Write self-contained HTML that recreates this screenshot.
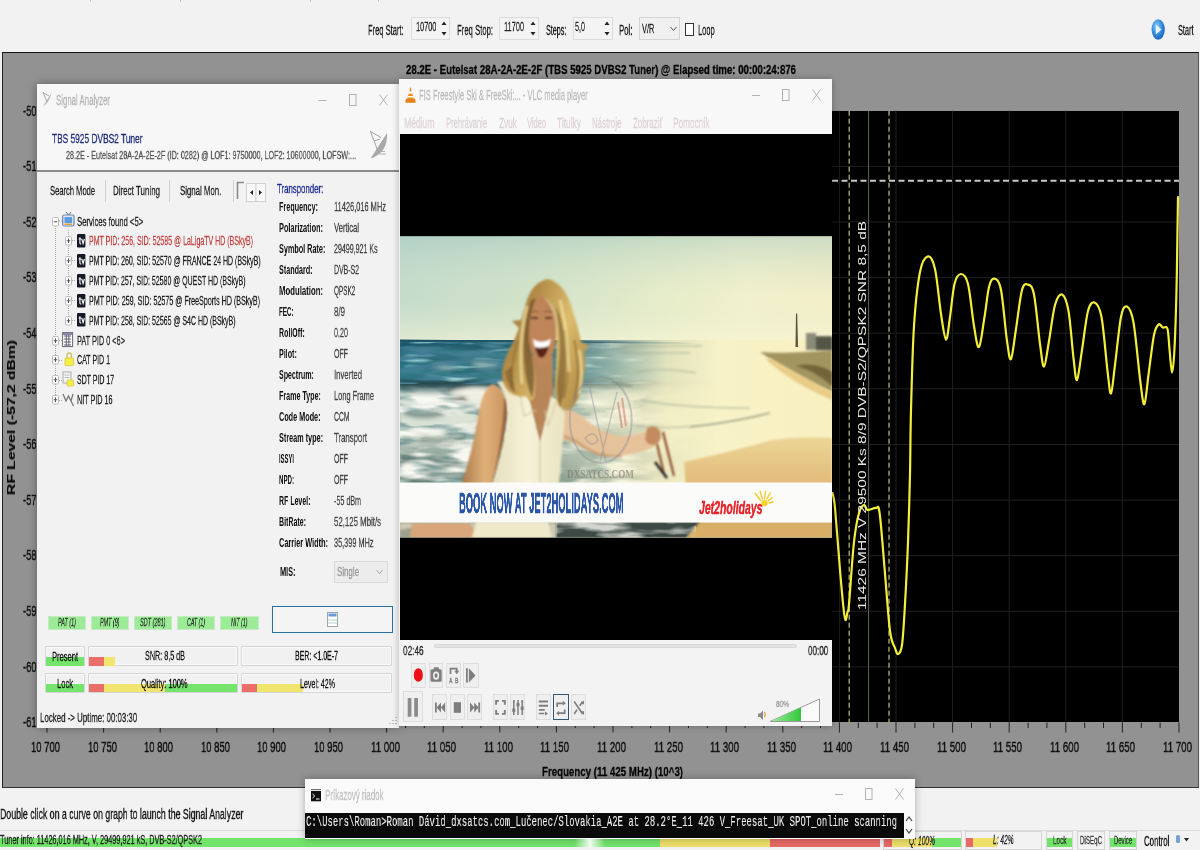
<!DOCTYPE html>
<html><head><meta charset="utf-8"><title>Signal Analyzer</title>
<style>
html,body{margin:0;padding:0;background:#f0f0f0;}
body{width:1200px;height:850px;position:relative;overflow:hidden;font-family:"Liberation Sans",sans-serif;}
.t{position:absolute;white-space:nowrap;transform-origin:0 50%;display:block;-webkit-text-stroke:0.3px currentColor;will-change:transform;}
.r{position:absolute;box-sizing:border-box;}
svg{position:absolute;overflow:visible;}
</style></head><body>
<div class="r" style="left:0.0px;top:0.0px;width:1200.0px;height:52.0px;background:#f2f2f2;"></div>
<div class="r" style="left:90.0px;top:0.0px;width:1.0px;height:1.5px;background:#c4c4c4;"></div>
<div class="r" style="left:180.0px;top:0.0px;width:1.0px;height:1.5px;background:#c4c4c4;"></div>
<div class="r" style="left:310.0px;top:0.0px;width:1.0px;height:1.5px;background:#c4c4c4;"></div>
<div class="r" style="left:378.0px;top:0.0px;width:1.0px;height:1.5px;background:#c4c4c4;"></div>
<span class="t" style="left:367.7px;top:21.0px;font:400 14px/18px 'Liberation Sans',sans-serif;color:#1a1a1a;transform:scaleX(0.5383);">Freq Start:</span>
<span class="t" style="left:456.7px;top:21.0px;font:400 14px/18px 'Liberation Sans',sans-serif;color:#1a1a1a;transform:scaleX(0.5508);">Freq Stop:</span>
<span class="t" style="left:545.7px;top:21.0px;font:400 14px/18px 'Liberation Sans',sans-serif;color:#1a1a1a;transform:scaleX(0.5115);">Steps:</span>
<span class="t" style="left:619.3px;top:21.0px;font:400 14px/18px 'Liberation Sans',sans-serif;color:#1a1a1a;transform:scaleX(0.5555);">Pol:</span>
<span class="t" style="left:698.3px;top:21.0px;font:400 14px/18px 'Liberation Sans',sans-serif;color:#1a1a1a;transform:scaleX(0.5362);">Loop</span>
<div class="r" style="left:410.7px;top:17.3px;width:39.3px;height:23.0px;background:#f4f4f4;border:1px solid #dcdcdc;"></div>
<span class="t" style="left:415.7px;top:18.0px;font:400 13px/17px 'Liberation Sans',sans-serif;color:#222;transform:scaleX(0.5616);">10700</span>
<svg style="left:441.0px;top:20px" width="6" height="18"><path d="M0.5 5 L3 1.5 L5.5 5Z M0.5 12 L3 15.5 L5.5 12Z" fill="#222"/></svg>
<div class="r" style="left:499.3px;top:17.3px;width:40.0px;height:23.0px;background:#f4f4f4;border:1px solid #dcdcdc;"></div>
<span class="t" style="left:504.3px;top:18.0px;font:400 13px/17px 'Liberation Sans',sans-serif;color:#222;transform:scaleX(0.5684);">11700</span>
<svg style="left:530.3px;top:20px" width="6" height="18"><path d="M0.5 5 L3 1.5 L5.5 5Z M0.5 12 L3 15.5 L5.5 12Z" fill="#222"/></svg>
<div class="r" style="left:572.7px;top:17.3px;width:40.6px;height:23.0px;background:#f4f4f4;border:1px solid #dcdcdc;"></div>
<span class="t" style="left:575.0px;top:18.0px;font:400 13px/17px 'Liberation Sans',sans-serif;color:#222;transform:scaleX(0.5533);">5,0</span>
<svg style="left:604.3px;top:20px" width="6" height="18"><path d="M0.5 5 L3 1.5 L5.5 5Z M0.5 12 L3 15.5 L5.5 12Z" fill="#222"/></svg>
<div class="r" style="left:639.3px;top:17.3px;width:40.7px;height:23.0px;background:#f0f0f0;border:1px solid #d4d4d4;"></div>
<span class="t" style="left:641.7px;top:19.5px;font:400 13px/17px 'Liberation Sans',sans-serif;color:#222;transform:scaleX(0.5676);">V/R</span>
<svg style="left:670px;top:26px" width="8" height="6"><path d="M0.5 1 L3.5 4.5 L6.5 1" fill="none" stroke="#555" stroke-width="1"/></svg>
<div class="r" style="left:685.0px;top:22.7px;width:9.0px;height:13.3px;background:#fff;border:1px solid #333;"></div>
<svg style="left:1148px;top:16px" width="22" height="28"><defs><radialGradient id="orb" cx="40%" cy="35%" r="70%"><stop offset="0" stop-color="#8fd0ff"/><stop offset="0.6" stop-color="#2f86d8"/><stop offset="1" stop-color="#1a5fb0"/></radialGradient></defs><ellipse cx="10.2" cy="13.5" rx="6.6" ry="10.3" fill="url(#orb)"/><path d="M7.8 8.5 L13.5 13.5 L7.8 18.5Z" fill="#e8f6ff"/></svg>
<span class="t" style="left:1177.5px;top:20.6px;font:400 14px/18px 'Liberation Sans',sans-serif;color:#1a1a1a;transform:scaleX(0.5243);">Start</span>
<div class="r" style="left:2.0px;top:52.0px;width:1196.5px;height:735.5px;background:#929292;border-top:1.5px solid #111;border-left:1px solid #222;border-bottom:1px solid #333;border-right:1px solid #555;"></div>
<span class="t" style="left:406.0px;top:60.8px;font:700 13px/17px 'Liberation Sans',sans-serif;color:#000;transform:scaleX(0.7402);">28.2E - Eutelsat 28A-2A-2E-2F (TBS 5925 DVBS2 Tuner) @ Elapsed time: 00:00:24:876</span>
<div class="r" style="left:47.0px;top:110.8px;width:1132.0px;height:611.7px;background:#000;"></div>
<span class="t" style="left:22.6px;top:100.5px;font:400 15px/19px 'Liberation Sans',sans-serif;color:#111;transform:scaleX(0.6227);-webkit-text-stroke:0.45px #111;">-50</span>
<span class="t" style="left:22.6px;top:156.1px;font:400 15px/19px 'Liberation Sans',sans-serif;color:#111;transform:scaleX(0.6227);-webkit-text-stroke:0.45px #111;">-51</span>
<span class="t" style="left:22.6px;top:211.7px;font:400 15px/19px 'Liberation Sans',sans-serif;color:#111;transform:scaleX(0.6227);-webkit-text-stroke:0.45px #111;">-52</span>
<span class="t" style="left:22.6px;top:267.3px;font:400 15px/19px 'Liberation Sans',sans-serif;color:#111;transform:scaleX(0.6227);-webkit-text-stroke:0.45px #111;">-53</span>
<span class="t" style="left:22.6px;top:322.9px;font:400 15px/19px 'Liberation Sans',sans-serif;color:#111;transform:scaleX(0.6227);-webkit-text-stroke:0.45px #111;">-54</span>
<span class="t" style="left:22.6px;top:378.5px;font:400 15px/19px 'Liberation Sans',sans-serif;color:#111;transform:scaleX(0.6227);-webkit-text-stroke:0.45px #111;">-55</span>
<span class="t" style="left:22.6px;top:434.2px;font:400 15px/19px 'Liberation Sans',sans-serif;color:#111;transform:scaleX(0.6227);-webkit-text-stroke:0.45px #111;">-56</span>
<span class="t" style="left:22.6px;top:489.8px;font:400 15px/19px 'Liberation Sans',sans-serif;color:#111;transform:scaleX(0.6227);-webkit-text-stroke:0.45px #111;">-57</span>
<span class="t" style="left:22.6px;top:545.4px;font:400 15px/19px 'Liberation Sans',sans-serif;color:#111;transform:scaleX(0.6227);-webkit-text-stroke:0.45px #111;">-58</span>
<span class="t" style="left:22.6px;top:601.0px;font:400 15px/19px 'Liberation Sans',sans-serif;color:#111;transform:scaleX(0.6227);-webkit-text-stroke:0.45px #111;">-59</span>
<span class="t" style="left:22.6px;top:656.6px;font:400 15px/19px 'Liberation Sans',sans-serif;color:#111;transform:scaleX(0.6227);-webkit-text-stroke:0.45px #111;">-60</span>
<span class="t" style="left:22.6px;top:712.2px;font:400 15px/19px 'Liberation Sans',sans-serif;color:#111;transform:scaleX(0.6227);-webkit-text-stroke:0.45px #111;">-61</span>
<span class="t" style="left:31.0px;top:736.8px;font:400 15px/19px 'Liberation Sans',sans-serif;color:#111;transform:scaleX(0.6321);-webkit-text-stroke:0.45px #111;">10 700</span>
<span class="t" style="left:87.6px;top:736.8px;font:400 15px/19px 'Liberation Sans',sans-serif;color:#111;transform:scaleX(0.6321);-webkit-text-stroke:0.45px #111;">10 750</span>
<span class="t" style="left:144.2px;top:736.8px;font:400 15px/19px 'Liberation Sans',sans-serif;color:#111;transform:scaleX(0.6321);-webkit-text-stroke:0.45px #111;">10 800</span>
<span class="t" style="left:200.8px;top:736.8px;font:400 15px/19px 'Liberation Sans',sans-serif;color:#111;transform:scaleX(0.6321);-webkit-text-stroke:0.45px #111;">10 850</span>
<span class="t" style="left:257.4px;top:736.8px;font:400 15px/19px 'Liberation Sans',sans-serif;color:#111;transform:scaleX(0.6321);-webkit-text-stroke:0.45px #111;">10 900</span>
<span class="t" style="left:314.0px;top:736.8px;font:400 15px/19px 'Liberation Sans',sans-serif;color:#111;transform:scaleX(0.6321);-webkit-text-stroke:0.45px #111;">10 950</span>
<span class="t" style="left:370.6px;top:736.8px;font:400 15px/19px 'Liberation Sans',sans-serif;color:#111;transform:scaleX(0.6478);-webkit-text-stroke:0.45px #111;">11 000</span>
<span class="t" style="left:427.2px;top:736.8px;font:400 15px/19px 'Liberation Sans',sans-serif;color:#111;transform:scaleX(0.6478);-webkit-text-stroke:0.45px #111;">11 050</span>
<span class="t" style="left:483.8px;top:736.8px;font:400 15px/19px 'Liberation Sans',sans-serif;color:#111;transform:scaleX(0.6478);-webkit-text-stroke:0.45px #111;">11 100</span>
<span class="t" style="left:540.4px;top:736.8px;font:400 15px/19px 'Liberation Sans',sans-serif;color:#111;transform:scaleX(0.6478);-webkit-text-stroke:0.45px #111;">11 150</span>
<span class="t" style="left:597.0px;top:736.8px;font:400 15px/19px 'Liberation Sans',sans-serif;color:#111;transform:scaleX(0.6478);-webkit-text-stroke:0.45px #111;">11 200</span>
<span class="t" style="left:653.6px;top:736.8px;font:400 15px/19px 'Liberation Sans',sans-serif;color:#111;transform:scaleX(0.6478);-webkit-text-stroke:0.45px #111;">11 250</span>
<span class="t" style="left:710.2px;top:736.8px;font:400 15px/19px 'Liberation Sans',sans-serif;color:#111;transform:scaleX(0.6478);-webkit-text-stroke:0.45px #111;">11 300</span>
<span class="t" style="left:766.8px;top:736.8px;font:400 15px/19px 'Liberation Sans',sans-serif;color:#111;transform:scaleX(0.6478);-webkit-text-stroke:0.45px #111;">11 350</span>
<span class="t" style="left:823.4px;top:736.8px;font:400 15px/19px 'Liberation Sans',sans-serif;color:#111;transform:scaleX(0.6478);-webkit-text-stroke:0.45px #111;">11 400</span>
<span class="t" style="left:880.0px;top:736.8px;font:400 15px/19px 'Liberation Sans',sans-serif;color:#111;transform:scaleX(0.6478);-webkit-text-stroke:0.45px #111;">11 450</span>
<span class="t" style="left:936.6px;top:736.8px;font:400 15px/19px 'Liberation Sans',sans-serif;color:#111;transform:scaleX(0.6478);-webkit-text-stroke:0.45px #111;">11 500</span>
<span class="t" style="left:993.2px;top:736.8px;font:400 15px/19px 'Liberation Sans',sans-serif;color:#111;transform:scaleX(0.6478);-webkit-text-stroke:0.45px #111;">11 550</span>
<span class="t" style="left:1049.8px;top:736.8px;font:400 15px/19px 'Liberation Sans',sans-serif;color:#111;transform:scaleX(0.6478);-webkit-text-stroke:0.45px #111;">11 600</span>
<span class="t" style="left:1106.4px;top:736.8px;font:400 15px/19px 'Liberation Sans',sans-serif;color:#111;transform:scaleX(0.6478);-webkit-text-stroke:0.45px #111;">11 650</span>
<span class="t" style="left:1163.0px;top:736.8px;font:400 15px/19px 'Liberation Sans',sans-serif;color:#111;transform:scaleX(0.6478);-webkit-text-stroke:0.45px #111;">11 700</span>
<svg style="left:0;top:0" width="1200" height="850"><path d="M47.0 722.5 v10 M65.9 722.5 v5.5 M84.7 722.5 v5.5 M103.6 722.5 v10 M122.5 722.5 v5.5 M141.3 722.5 v5.5 M160.2 722.5 v10 M179.1 722.5 v5.5 M197.9 722.5 v5.5 M216.8 722.5 v10 M235.7 722.5 v5.5 M254.5 722.5 v5.5 M273.4 722.5 v10 M292.3 722.5 v5.5 M311.1 722.5 v5.5 M330.0 722.5 v10 M348.9 722.5 v5.5 M367.7 722.5 v5.5 M386.6 722.5 v10 M405.5 722.5 v5.5 M424.3 722.5 v5.5 M443.2 722.5 v10 M462.1 722.5 v5.5 M480.9 722.5 v5.5 M499.8 722.5 v10 M518.7 722.5 v5.5 M537.5 722.5 v5.5 M556.4 722.5 v10 M575.3 722.5 v5.5 M594.1 722.5 v5.5 M613.0 722.5 v10 M631.9 722.5 v5.5 M650.7 722.5 v5.5 M669.6 722.5 v10 M688.5 722.5 v5.5 M707.3 722.5 v5.5 M726.2 722.5 v10 M745.1 722.5 v5.5 M763.9 722.5 v5.5 M782.8 722.5 v10 M801.7 722.5 v5.5 M820.5 722.5 v5.5 M839.4 722.5 v10 M858.3 722.5 v5.5 M877.1 722.5 v5.5 M896.0 722.5 v10 M914.9 722.5 v5.5 M933.7 722.5 v5.5 M952.6 722.5 v10 M971.5 722.5 v5.5 M990.3 722.5 v5.5 M1009.2 722.5 v10 M1028.1 722.5 v5.5 M1046.9 722.5 v5.5 M1065.8 722.5 v10 M1084.7 722.5 v5.5 M1103.5 722.5 v5.5 M1122.4 722.5 v10 M1141.3 722.5 v5.5 M1160.1 722.5 v5.5 M1179.0 722.5 v10 " stroke="#222" stroke-width="1" fill="none"/><path d="M103.6 110.8 V722.5 M160.2 110.8 V722.5 M216.8 110.8 V722.5 M273.4 110.8 V722.5 M330.0 110.8 V722.5 M386.6 110.8 V722.5 M443.2 110.8 V722.5 M499.8 110.8 V722.5 M556.4 110.8 V722.5 M613.0 110.8 V722.5 M669.6 110.8 V722.5 M726.2 110.8 V722.5 M782.8 110.8 V722.5 M839.4 110.8 V722.5 M896.0 110.8 V722.5 M952.6 110.8 V722.5 M1009.2 110.8 V722.5 M1065.8 110.8 V722.5 M1122.4 110.8 V722.5 M47 166.4 H1179 M47 222.0 H1179 M47 277.6 H1179 M47 333.2 H1179 M47 388.8 H1179 M47 444.5 H1179 M47 500.1 H1179 M47 555.7 H1179 M47 611.3 H1179 M47 666.9 H1179 " stroke="#1f1f1f" stroke-width="1" fill="none"/><path d="M832 180.7 H1179" stroke="#c8c8c8" stroke-width="2" stroke-dasharray="6 3.5" fill="none"/><path d="M849.2 110.8 V722.5 M889 110.8 V722.5" stroke="#b8b070" stroke-width="1.3" stroke-dasharray="5 3" fill="none"/><path d="M868.6 110.8 V722.5" stroke="#5a6a4a" stroke-width="1" fill="none"/><path d="M832.5 493.0 C832.9 495.5 833.8 495.2 835.0 508.0 C836.2 520.8 838.6 553.3 840.0 570.0 C841.4 586.7 842.6 599.7 843.5 608.0 C844.4 616.3 844.8 619.3 845.5 620.0 C846.2 620.7 846.9 614.7 847.5 612.0 C848.1 609.3 847.9 615.7 849.0 604.0 C850.1 592.3 852.3 557.2 854.0 542.0 C855.7 526.8 857.3 519.2 859.0 513.0 C860.7 506.8 862.6 505.5 864.0 505.0 C865.4 504.5 865.6 509.5 867.6 510.0 C869.6 510.5 874.0 507.5 876.0 508.0 C878.0 508.5 878.1 502.7 879.6 513.0 C881.1 523.3 883.0 550.3 884.7 570.0 C886.4 589.7 888.3 618.0 890.0 631.0 C891.7 644.0 893.7 644.2 895.0 648.0 C896.3 651.8 896.8 654.5 898.0 654.0 C899.2 653.5 900.8 653.3 902.0 645.0 C903.2 636.7 904.0 621.2 905.0 604.0 C906.0 586.8 907.2 563.7 908.0 542.0 C908.8 520.3 909.5 496.0 910.0 474.0 C910.5 452.0 910.3 434.7 911.0 410.0 C911.7 385.3 912.5 349.0 914.0 326.0 C915.5 303.0 917.7 283.6 920.0 272.0 C922.3 260.4 925.5 256.9 928.0 256.4 C930.5 255.9 932.8 259.4 935.0 269.0 C937.2 278.6 939.2 302.2 941.0 314.0 C942.8 325.8 944.5 339.0 946.0 339.5 C947.5 340.0 948.6 326.2 950.0 317.0 C951.4 307.8 952.7 291.2 954.5 284.0 C956.3 276.8 958.8 274.0 961.0 274.0 C963.2 274.0 965.8 275.3 968.0 284.0 C970.2 292.7 972.2 315.5 974.0 326.0 C975.8 336.5 977.2 348.5 979.0 347.0 C980.8 345.5 982.8 327.0 984.5 317.0 C986.2 307.0 987.4 293.4 989.0 287.0 C990.6 280.6 992.4 278.1 994.4 278.6 C996.4 279.1 998.9 279.6 1001.0 290.0 C1003.1 300.4 1005.3 329.5 1007.0 341.0 C1008.7 352.5 1009.5 361.0 1011.0 359.0 C1012.5 357.0 1014.2 340.5 1016.0 329.0 C1017.8 317.5 1020.0 297.4 1022.0 290.0 C1024.0 282.6 1026.0 283.9 1028.0 284.6 C1030.0 285.4 1032.0 284.6 1034.0 294.5 C1036.0 304.4 1038.3 332.0 1040.0 344.0 C1041.7 356.0 1042.5 367.0 1044.0 366.5 C1045.5 366.0 1047.2 351.2 1049.0 341.0 C1050.8 330.8 1052.8 312.8 1055.0 305.0 C1057.2 297.2 1059.8 293.5 1062.0 294.5 C1064.2 295.5 1066.6 300.2 1068.5 311.0 C1070.4 321.8 1072.2 347.5 1073.6 359.0 C1075.0 370.5 1075.6 381.5 1077.0 380.0 C1078.4 378.5 1080.2 361.5 1082.0 350.0 C1083.8 338.5 1085.9 318.9 1088.0 311.0 C1090.1 303.1 1092.3 301.6 1094.6 302.6 C1096.8 303.6 1099.3 305.6 1101.5 317.0 C1103.7 328.4 1105.9 358.2 1107.5 371.0 C1109.1 383.8 1109.8 394.5 1111.0 393.5 C1112.2 392.5 1113.3 377.8 1115.0 365.0 C1116.7 352.2 1119.0 326.8 1121.0 317.0 C1123.0 307.2 1124.9 305.5 1127.0 306.5 C1129.1 307.5 1131.3 310.2 1133.6 323.0 C1135.8 335.8 1138.7 369.5 1140.5 383.0 C1142.3 396.5 1143.1 405.5 1144.4 404.0 C1145.8 402.5 1147.0 385.5 1148.6 374.0 C1150.2 362.5 1152.3 343.2 1154.0 335.0 C1155.7 326.8 1157.0 325.8 1158.5 324.5 C1160.0 323.2 1161.5 326.8 1163.0 327.5 C1164.5 328.2 1166.4 325.2 1167.5 329.0 C1168.6 332.8 1168.8 342.8 1169.6 350.0 C1170.3 357.2 1171.2 372.5 1172.0 372.5 C1172.8 372.5 1173.7 363.8 1174.4 350.0 C1175.2 336.2 1176.0 310.0 1176.5 290.0 C1177.0 270.0 1177.2 245.5 1177.5 230.0 C1177.8 214.5 1177.9 202.5 1178.0 197.0" stroke="#f2ee3c" stroke-width="2.2" fill="none" stroke-linejoin="round" stroke-linecap="round"/></svg>
<div class="t" style="left:862.5px;top:609.6px;transform-origin:0 0;transform:rotate(-90deg) translateY(-50%) scaleX(1.5427);font:400 10px/12px 'Liberation Sans',sans-serif;color:#e8e8e8;-webkit-text-stroke:0">11426 MHz V 29500 Ks 8/9 DVB-S2/QPSK2 SNR 8,5 dB</div>
<div class="t" style="left:12.2px;top:494.7px;transform-origin:0 0;transform:rotate(-90deg) translateY(-50%) scaleX(1.5672);font:700 10px/12px 'Liberation Sans',sans-serif;color:#0a0a0a;-webkit-text-stroke:0.2px #0a0a0a">RF Level (-57,2 dBm)</div>
<span class="t" style="left:541.5px;top:762.5px;font:700 13px/17px 'Liberation Sans',sans-serif;color:#000;transform:scaleX(0.7463);">Frequency (11 425 MHz) (10^3)</span>
<div class="r" style="left:0.0px;top:787.5px;width:1200.0px;height:63.0px;background:#f2f2f2;"></div>
<span class="t" style="left:0.0px;top:805.0px;font:400 14px/18px 'Liberation Sans',sans-serif;color:#111;transform:scaleX(0.6265);">Double click on a curve on graph to launch the Signal Analyzer</span>
<div class="r" style="left:0.0px;top:830.0px;width:1200.0px;height:1.0px;background:#dadada;"></div>
<div class="r" style="left:0.0px;top:838.3px;width:660.0px;height:9.0px;background:#72e46a;"></div>
<div class="r" style="left:660.0px;top:838.3px;width:110.0px;height:9.0px;background:#eee06a;"></div>
<div class="r" style="left:770.0px;top:838.3px;width:110.0px;height:9.0px;background:#e86a66;"></div>
<span class="t" style="left:0.0px;top:832.0px;font:400 12px/16px 'Liberation Sans',sans-serif;color:#222;transform:scaleX(0.6089);">Tuner info: 11426,016 MHz, V, 29499,921 kS, DVB-S2/QPSK2</span>
<div class="r" style="left:883.3px;top:831.0px;width:78.4px;height:19.0px;background:#f2f2f2;border:1px solid #d6d6d6;"></div>
<div class="r" style="left:884.3px;top:838.3px;width:8.0px;height:9.0px;background:#e86a66;"></div>
<div class="r" style="left:892.0px;top:838.3px;width:40.0px;height:9.0px;background:#eee06a;"></div>
<div class="r" style="left:932.0px;top:838.3px;width:29.0px;height:9.0px;background:#72e46a;"></div>
<span class="t" style="left:909.0px;top:832.7px;font:italic 400 12px/16px 'Liberation Sans',sans-serif;color:#222;transform:scaleX(0.5568);">Q: 100%</span>
<div class="r" style="left:965.0px;top:831.0px;width:76.7px;height:19.0px;background:#f2f2f2;border:1px solid #d6d6d6;"></div>
<div class="r" style="left:966.0px;top:838.3px;width:7.0px;height:9.0px;background:#e86a66;"></div>
<div class="r" style="left:973.0px;top:838.3px;width:24.0px;height:9.0px;background:#eee06a;"></div>
<span class="t" style="left:992.7px;top:832.3px;font:italic 400 12px/16px 'Liberation Sans',sans-serif;color:#222;transform:scaleX(0.5514);">L: 42%</span>
<div class="r" style="left:1046.0px;top:831.0px;width:27.3px;height:19.0px;background:#f2f2f2;border:1px solid #d6d6d6;"></div>
<div class="r" style="left:1047.0px;top:838.3px;width:25.3px;height:9.0px;background:#72e46a;"></div>
<span class="t" style="left:1053.0px;top:832.8px;font:400 11px/15px 'Liberation Sans',sans-serif;color:#333;transform:scaleX(0.5810);">Lock</span>
<div class="r" style="left:1077.3px;top:831.0px;width:27.7px;height:19.0px;background:#f2f2f2;border:1px solid #d6d6d6;"></div>
<span class="t" style="left:1080.0px;top:832.8px;font:400 11px/15px 'Liberation Sans',sans-serif;color:#333;transform:scaleX(0.5623);">DiSEqC</span>
<div class="r" style="left:1109.3px;top:831.0px;width:27.4px;height:19.0px;background:#f2f2f2;border:1px solid #d6d6d6;"></div>
<div class="r" style="left:1110.3px;top:838.3px;width:25.4px;height:9.0px;background:#72e46a;"></div>
<span class="t" style="left:1114.0px;top:832.8px;font:400 11px/15px 'Liberation Sans',sans-serif;color:#333;transform:scaleX(0.5354);">Device</span>
<span class="t" style="left:1144.0px;top:831.5px;font:400 14px/18px 'Liberation Sans',sans-serif;color:#111;transform:scaleX(0.5606);">Control</span>
<svg style="left:1174px;top:833px" width="18" height="14"><rect x="2" y="2" width="4" height="8" rx="1.5" fill="#7aa0d8"/><path d="M10 5 h5 l-2.5 3.5z" fill="#222"/></svg>
<div class="r" style="left:36.8px;top:83.8px;width:362.5px;height:644.0px;background:#f2f2f2;box-shadow:0 0 9px rgba(0,0,0,.35);"></div>
<div class="r" style="left:36.8px;top:83.8px;width:362.5px;height:88.5px;background:#f7f7f7;border-bottom:2px solid #8a8a8a;"></div>
<svg style="left:41px;top:91px" width="12" height="18" viewBox="0 0 12 18"><path d="M10.500 2 L2 15.500 Q8 12 10.500 2Z" fill="#b4b4b4"/><path d="M2 1.500 L6 11 M2 1.500 L8 5" stroke="#a8a8a8" stroke-width="1" fill="none"/></svg>
<span class="t" style="left:56.0px;top:91.0px;font:400 14px/18px 'Liberation Sans',sans-serif;color:#b4b4b4;transform:scaleX(0.5596);">Signal Analyzer</span>
<svg style="left:315px;top:92px" width="80" height="16"><path d="M3.5 8.5 h8" stroke="#b2b2b2" stroke-width="1"/><rect x="34.5" y="2.5" width="6.5" height="11" fill="none" stroke="#b2b2b2" stroke-width="1"/><path d="M64.5 2.5 L72.5 13.5 M72.5 2.5 L64.5 13.5" stroke="#b2b2b2" stroke-width="1"/></svg>
<span class="t" style="left:52.0px;top:129.5px;font:400 13px/17px 'Liberation Sans',sans-serif;color:#1c2a7a;transform:scaleX(0.6423);">TBS 5925 DVBS2 Tuner</span>
<span class="t" style="left:65.8px;top:148.0px;font:400 11px/15px 'Liberation Sans',sans-serif;color:#505050;transform:scaleX(0.6543);">28.2E - Eutelsat 28A-2A-2E-2F (ID: 0282) @ LOF1: 9750000, LOF2: 10600000, LOFSW:...</span>
<svg style="left:0;top:0" width="400" height="170"><path d="M387 133 L370.500 158.500 Q388 153 387 133Z" fill="#a9a9a9"/><path d="M370.500 131.500 L377.500 150 M370.500 131.500 L381 137.500 M374 141 L380 139" stroke="#a0a0a0" stroke-width="1" fill="none"/><path d="M379 154 h7 M380 151.500 h5" stroke="#b0b0b0" stroke-width="1"/></svg>
<span class="t" style="left:50.3px;top:182.1px;font:400 13px/17px 'Liberation Sans',sans-serif;color:#222;transform:scaleX(0.5820);">Search Mode</span>
<span class="t" style="left:113.0px;top:182.1px;font:400 13px/17px 'Liberation Sans',sans-serif;color:#222;transform:scaleX(0.6137);">Direct Tuning</span>
<span class="t" style="left:179.7px;top:182.1px;font:400 13px/17px 'Liberation Sans',sans-serif;color:#222;transform:scaleX(0.6016);">Signal Mon.</span>
<div class="r" style="left:104.7px;top:180.0px;width:1.0px;height:22.0px;background:#cfcfcf;"></div>
<div class="r" style="left:168.8px;top:180.0px;width:1.0px;height:22.0px;background:#cfcfcf;"></div>
<div class="r" style="left:232.6px;top:180.0px;width:1.0px;height:22.0px;background:#cfcfcf;"></div>
<svg style="left:236px;top:181px" width="32" height="22"><path d="M1.5 18 V1.5 H8" stroke="#8a8a8a" stroke-width="1.6" fill="none"/><rect x="10.5" y="2.5" width="9.5" height="18" fill="#fbfbfb" stroke="#d0d0d0"/><rect x="20" y="2.5" width="9.5" height="18" fill="#fbfbfb" stroke="#d0d0d0"/><path d="M17 9 v5 l-3 -2.5z M23 9 v5 l3 -2.5z" fill="#222"/></svg>
<svg style="left:0;top:0" width="300" height="420"><path d="M55.5 226 V400 M68.5 230 V320 M59 221 h4 M72 240.5 h4 M72 260.5 h4 M72 280.5 h4 M72 300.5 h4 M72 320.5 h4 M59 340.5 h4 M59 360.5 h4 M59 380.5 h4 M59 400.5 h4" stroke="#aaa" stroke-width="1" stroke-dasharray="1 1" fill="none"/></svg>
<svg style="left:52.0px;top:216.5px" width="7" height="10"><rect x="0.500" y="0.500" width="6" height="8.500" rx="1" fill="#fdfdfd" stroke="#bcbcbc"/><path d="M1.800 4.750 h3.400" stroke="#555" stroke-width="1"/></svg>
<svg style="left:62px;top:211px" width="13" height="17"><path d="M4 1 L6.5 4 L9 1" stroke="#666" stroke-width="1" fill="none"/><rect x="0.7" y="4" width="11.3" height="11" rx="1.5" fill="#dfe9f5" stroke="#6a8ab0" stroke-width="1.2"/><rect x="2.5" y="6" width="7.6" height="6" fill="#5b9be0"/><rect x="2.5" y="12.5" width="7.6" height="1.5" fill="#e9a03a"/></svg>
<span class="t" style="left:76.8px;top:212.5px;font:400 13px/17px 'Liberation Sans',sans-serif;color:#222;transform:scaleX(0.5910);">Services found &lt;5&gt;</span>
<svg style="left:65.0px;top:236.1px" width="7" height="10"><rect x="0.500" y="0.500" width="6" height="8.500" rx="1" fill="#fdfdfd" stroke="#bcbcbc"/><path d="M1.800 4.750 h3.400 M3.500 2.500 v4.500" stroke="#555" stroke-width="1"/></svg>
<svg style="left:76.500px;top:233.8px" width="9" height="14"><rect x="0" y="0" width="8.400" height="13.400" rx="1.200" fill="#121826"/><path d="M1.600 5 h2.800 M2.900 3.300 v5.800 q0 1 1.300 0.800 M4.800 5 l1.300 4.600 l1.300 -4.600" stroke="#fff" stroke-width="1.100" fill="none"/></svg>
<span class="t" style="left:89.4px;top:232.1px;font:400 13px/17px 'Liberation Sans',sans-serif;color:#c44444;transform:scaleX(0.5405);">PMT PID: 256, SID: 52585 @ LaLigaTV HD (BSkyB)</span>
<svg style="left:65.0px;top:256.0px" width="7" height="10"><rect x="0.500" y="0.500" width="6" height="8.500" rx="1" fill="#fdfdfd" stroke="#bcbcbc"/><path d="M1.800 4.750 h3.400 M3.500 2.500 v4.500" stroke="#555" stroke-width="1"/></svg>
<svg style="left:76.500px;top:253.7px" width="9" height="14"><rect x="0" y="0" width="8.400" height="13.400" rx="1.200" fill="#121826"/><path d="M1.600 5 h2.800 M2.900 3.300 v5.800 q0 1 1.300 0.800 M4.800 5 l1.300 4.600 l1.300 -4.600" stroke="#fff" stroke-width="1.100" fill="none"/></svg>
<span class="t" style="left:89.4px;top:252.0px;font:400 13px/17px 'Liberation Sans',sans-serif;color:#222;transform:scaleX(0.5375);">PMT PID: 260, SID: 52570 @ FRANCE 24 HD (BSkyB)</span>
<svg style="left:65.0px;top:275.9px" width="7" height="10"><rect x="0.500" y="0.500" width="6" height="8.500" rx="1" fill="#fdfdfd" stroke="#bcbcbc"/><path d="M1.800 4.750 h3.400 M3.500 2.500 v4.500" stroke="#555" stroke-width="1"/></svg>
<svg style="left:76.500px;top:273.6px" width="9" height="14"><rect x="0" y="0" width="8.400" height="13.400" rx="1.200" fill="#121826"/><path d="M1.600 5 h2.800 M2.900 3.300 v5.800 q0 1 1.300 0.800 M4.800 5 l1.300 4.600 l1.300 -4.600" stroke="#fff" stroke-width="1.100" fill="none"/></svg>
<span class="t" style="left:89.4px;top:271.9px;font:400 13px/17px 'Liberation Sans',sans-serif;color:#222;transform:scaleX(0.5354);">PMT PID: 257, SID: 52580 @ QUEST HD (BSkyB)</span>
<svg style="left:65.0px;top:295.8px" width="7" height="10"><rect x="0.500" y="0.500" width="6" height="8.500" rx="1" fill="#fdfdfd" stroke="#bcbcbc"/><path d="M1.800 4.750 h3.400 M3.500 2.500 v4.500" stroke="#555" stroke-width="1"/></svg>
<svg style="left:76.500px;top:293.5px" width="9" height="14"><rect x="0" y="0" width="8.400" height="13.400" rx="1.200" fill="#121826"/><path d="M1.600 5 h2.800 M2.900 3.300 v5.800 q0 1 1.300 0.800 M4.800 5 l1.300 4.600 l1.300 -4.600" stroke="#fff" stroke-width="1.100" fill="none"/></svg>
<span class="t" style="left:89.4px;top:291.8px;font:400 13px/17px 'Liberation Sans',sans-serif;color:#222;transform:scaleX(0.5480);">PMT PID: 259, SID: 52575 @ FreeSports HD (BSkyB)</span>
<svg style="left:65.0px;top:315.7px" width="7" height="10"><rect x="0.500" y="0.500" width="6" height="8.500" rx="1" fill="#fdfdfd" stroke="#bcbcbc"/><path d="M1.800 4.750 h3.400 M3.500 2.500 v4.500" stroke="#555" stroke-width="1"/></svg>
<svg style="left:76.500px;top:313.4px" width="9" height="14"><rect x="0" y="0" width="8.400" height="13.400" rx="1.200" fill="#121826"/><path d="M1.600 5 h2.800 M2.900 3.300 v5.800 q0 1 1.300 0.800 M4.800 5 l1.300 4.600 l1.300 -4.600" stroke="#fff" stroke-width="1.100" fill="none"/></svg>
<span class="t" style="left:89.4px;top:311.7px;font:400 13px/17px 'Liberation Sans',sans-serif;color:#222;transform:scaleX(0.5365);">PMT PID: 258, SID: 52565 @ S4C HD (BSkyB)</span>
<svg style="left:52.0px;top:335.5px" width="7" height="10"><rect x="0.500" y="0.500" width="6" height="8.500" rx="1" fill="#fdfdfd" stroke="#bcbcbc"/><path d="M1.800 4.750 h3.400 M3.500 2.500 v4.500" stroke="#555" stroke-width="1"/></svg>
<span class="t" style="left:76.8px;top:331.5px;font:400 13px/17px 'Liberation Sans',sans-serif;color:#222;transform:scaleX(0.5617);">PAT PID 0 &lt;6&gt;</span>
<svg style="left:52.0px;top:355.4px" width="7" height="10"><rect x="0.500" y="0.500" width="6" height="8.500" rx="1" fill="#fdfdfd" stroke="#bcbcbc"/><path d="M1.800 4.750 h3.400 M3.500 2.500 v4.500" stroke="#555" stroke-width="1"/></svg>
<span class="t" style="left:76.8px;top:351.4px;font:400 13px/17px 'Liberation Sans',sans-serif;color:#222;transform:scaleX(0.5416);">CAT PID 1</span>
<svg style="left:52.0px;top:375.2px" width="7" height="10"><rect x="0.500" y="0.500" width="6" height="8.500" rx="1" fill="#fdfdfd" stroke="#bcbcbc"/><path d="M1.800 4.750 h3.400 M3.500 2.500 v4.500" stroke="#555" stroke-width="1"/></svg>
<span class="t" style="left:76.8px;top:371.2px;font:400 13px/17px 'Liberation Sans',sans-serif;color:#222;transform:scaleX(0.5353);">SDT PID 17</span>
<svg style="left:52.0px;top:395.1px" width="7" height="10"><rect x="0.500" y="0.500" width="6" height="8.500" rx="1" fill="#fdfdfd" stroke="#bcbcbc"/><path d="M1.800 4.750 h3.400 M3.500 2.500 v4.500" stroke="#555" stroke-width="1"/></svg>
<span class="t" style="left:76.8px;top:391.1px;font:400 13px/17px 'Liberation Sans',sans-serif;color:#222;transform:scaleX(0.5542);">NIT PID 16</span>
<svg style="left:62px;top:332px" width="12" height="16"><rect x="0.6" y="0.6" width="10" height="14" fill="#fff" stroke="#667"/><path d="M2 4 h7 M2 7 h7 M2 10 h7 M2 13 h7 M4.3 3 v11 M6.8 3 v11" stroke="#556" stroke-width="0.9"/><rect x="1" y="1" width="9" height="2" fill="#88a"/></svg>
<svg style="left:64px;top:351px" width="10" height="16"><path d="M3 7 V4.5 a2.2 2.5 0 0 1 4.4 0 V7" stroke="#c8c060" stroke-width="1.3" fill="none"/><rect x="1" y="7" width="8.5" height="7.5" rx="1" fill="#f4ee4a" stroke="#d4c830" stroke-width="0.8"/></svg>
<svg style="left:62px;top:371px" width="13" height="17"><rect x="1" y="1" width="8" height="11" fill="#f4f4f4" stroke="#aaa"/><path d="M2.5 4 h5 M2.5 6.5 h5" stroke="#bbb"/><rect x="5" y="9" width="6.5" height="6" rx="1" fill="#f4ee4a" stroke="#d4c830" stroke-width="0.8"/></svg>
<svg style="left:62px;top:392px" width="13" height="15"><path d="M1 2 L4 9 L6.5 4 L9 9 L11 2 M9 9 L11.5 14" stroke="#777" stroke-width="1.3" fill="none"/></svg>
<span class="t" style="left:276.8px;top:179.8px;font:400 13px/17px 'Liberation Sans',sans-serif;color:#1c2a90;transform:scaleX(0.6013);">Transponder:</span>
<span class="t" style="left:279.0px;top:198.2px;font:700 13px/17px 'Liberation Sans',sans-serif;color:#111;transform:scaleX(0.5566);-webkit-text-stroke:0;">Frequency:</span>
<span class="t" style="left:334.0px;top:198.2px;font:400 13px/17px 'Liberation Sans',sans-serif;color:#444;transform:scaleX(0.5726);">11426,016 MHz</span>
<span class="t" style="left:279.0px;top:219.2px;font:700 13px/17px 'Liberation Sans',sans-serif;color:#111;transform:scaleX(0.5640);-webkit-text-stroke:0;">Polarization:</span>
<span class="t" style="left:334.0px;top:219.2px;font:400 13px/17px 'Liberation Sans',sans-serif;color:#444;transform:scaleX(0.5864);">Vertical</span>
<span class="t" style="left:279.0px;top:240.2px;font:700 13px/17px 'Liberation Sans',sans-serif;color:#111;transform:scaleX(0.5573);-webkit-text-stroke:0;">Symbol Rate:</span>
<span class="t" style="left:334.0px;top:240.2px;font:400 13px/17px 'Liberation Sans',sans-serif;color:#444;transform:scaleX(0.5434);">29499,921 Ks</span>
<span class="t" style="left:279.0px;top:261.2px;font:700 13px/17px 'Liberation Sans',sans-serif;color:#111;transform:scaleX(0.5538);-webkit-text-stroke:0;">Standard:</span>
<span class="t" style="left:334.0px;top:261.2px;font:400 13px/17px 'Liberation Sans',sans-serif;color:#444;transform:scaleX(0.5324);">DVB-S2</span>
<span class="t" style="left:279.0px;top:282.2px;font:700 13px/17px 'Liberation Sans',sans-serif;color:#111;transform:scaleX(0.5974);-webkit-text-stroke:0;">Modulation:</span>
<span class="t" style="left:334.0px;top:282.2px;font:400 13px/17px 'Liberation Sans',sans-serif;color:#444;transform:scaleX(0.4913);">QPSK2</span>
<span class="t" style="left:279.0px;top:303.2px;font:700 13px/17px 'Liberation Sans',sans-serif;color:#111;transform:scaleX(0.4781);-webkit-text-stroke:0;">FEC:</span>
<span class="t" style="left:334.0px;top:303.2px;font:400 13px/17px 'Liberation Sans',sans-serif;color:#444;transform:scaleX(0.6087);">8/9</span>
<span class="t" style="left:279.0px;top:324.2px;font:700 13px/17px 'Liberation Sans',sans-serif;color:#111;transform:scaleX(0.5393);-webkit-text-stroke:0;">RollOff:</span>
<span class="t" style="left:334.0px;top:324.2px;font:400 13px/17px 'Liberation Sans',sans-serif;color:#444;transform:scaleX(0.5533);">0.20</span>
<span class="t" style="left:279.0px;top:345.2px;font:700 13px/17px 'Liberation Sans',sans-serif;color:#111;transform:scaleX(0.5478);-webkit-text-stroke:0;">Pilot:</span>
<span class="t" style="left:334.0px;top:345.2px;font:400 13px/17px 'Liberation Sans',sans-serif;color:#444;transform:scaleX(0.5386);">OFF</span>
<span class="t" style="left:279.0px;top:366.2px;font:700 13px/17px 'Liberation Sans',sans-serif;color:#111;transform:scaleX(0.5413);-webkit-text-stroke:0;">Spectrum:</span>
<span class="t" style="left:334.0px;top:366.2px;font:400 13px/17px 'Liberation Sans',sans-serif;color:#444;transform:scaleX(0.5961);">Inverted</span>
<span class="t" style="left:279.0px;top:387.2px;font:700 13px/17px 'Liberation Sans',sans-serif;color:#111;transform:scaleX(0.5489);-webkit-text-stroke:0;">Frame Type:</span>
<span class="t" style="left:334.0px;top:387.2px;font:400 13px/17px 'Liberation Sans',sans-serif;color:#444;transform:scaleX(0.5707);">Long Frame</span>
<span class="t" style="left:279.0px;top:408.2px;font:700 13px/17px 'Liberation Sans',sans-serif;color:#111;transform:scaleX(0.5579);-webkit-text-stroke:0;">Code Mode:</span>
<span class="t" style="left:334.0px;top:408.2px;font:400 13px/17px 'Liberation Sans',sans-serif;color:#444;transform:scaleX(0.5236);">CCM</span>
<span class="t" style="left:279.0px;top:429.2px;font:700 13px/17px 'Liberation Sans',sans-serif;color:#111;transform:scaleX(0.5587);-webkit-text-stroke:0;">Stream type:</span>
<span class="t" style="left:334.0px;top:429.2px;font:400 13px/17px 'Liberation Sans',sans-serif;color:#444;transform:scaleX(0.5984);">Transport</span>
<span class="t" style="left:279.0px;top:450.2px;font:700 13px/17px 'Liberation Sans',sans-serif;color:#111;transform:scaleX(0.4513);-webkit-text-stroke:0;">ISSYI</span>
<span class="t" style="left:334.0px;top:450.2px;font:400 13px/17px 'Liberation Sans',sans-serif;color:#444;transform:scaleX(0.5386);">OFF</span>
<span class="t" style="left:279.0px;top:471.2px;font:700 13px/17px 'Liberation Sans',sans-serif;color:#111;transform:scaleX(0.4721);-webkit-text-stroke:0;">NPD:</span>
<span class="t" style="left:334.0px;top:471.2px;font:400 13px/17px 'Liberation Sans',sans-serif;color:#444;transform:scaleX(0.5386);">OFF</span>
<span class="t" style="left:279.0px;top:492.2px;font:700 13px/17px 'Liberation Sans',sans-serif;color:#111;transform:scaleX(0.5383);-webkit-text-stroke:0;">RF Level:</span>
<span class="t" style="left:334.0px;top:492.2px;font:400 13px/17px 'Liberation Sans',sans-serif;color:#444;transform:scaleX(0.5495);">-55 dBm</span>
<span class="t" style="left:279.0px;top:513.2px;font:700 13px/17px 'Liberation Sans',sans-serif;color:#111;transform:scaleX(0.5418);-webkit-text-stroke:0;">BitRate:</span>
<span class="t" style="left:334.0px;top:513.2px;font:400 13px/17px 'Liberation Sans',sans-serif;color:#444;transform:scaleX(0.6022);">52,125 Mbit/s</span>
<span class="t" style="left:279.0px;top:534.2px;font:700 13px/17px 'Liberation Sans',sans-serif;color:#111;transform:scaleX(0.5661);-webkit-text-stroke:0;">Carrier Width:</span>
<span class="t" style="left:334.0px;top:534.2px;font:400 13px/17px 'Liberation Sans',sans-serif;color:#444;transform:scaleX(0.5636);">35,399 MHz</span>
<span class="t" style="left:279.5px;top:563.3px;font:700 13px/17px 'Liberation Sans',sans-serif;color:#111;transform:scaleX(0.5648);-webkit-text-stroke:0;">MIS:</span>
<div class="r" style="left:333.5px;top:561.0px;width:54.0px;height:21.5px;background:#ececec;border:1px solid #d9d9d9;"></div>
<span class="t" style="left:337.0px;top:563.3px;font:400 13px/17px 'Liberation Sans',sans-serif;color:#999;transform:scaleX(0.6088);">Single</span>
<svg style="left:376px;top:569px" width="8" height="6"><path d="M0.5 1 L3.5 4.5 L6.5 1" fill="none" stroke="#aaa" stroke-width="1"/></svg>
<div class="r" style="left:48.0px;top:615.5px;width:37.9px;height:14.5px;background:#9ceb96;border:1px solid #c9e9c6;"></div>
<span class="t" style="left:58.0px;top:615.3px;font:italic 400 11px/15px 'Liberation Sans',sans-serif;color:#2a3a2a;transform:scaleX(0.4964);">PAT (1)</span>
<div class="r" style="left:91.0px;top:615.5px;width:38.0px;height:14.5px;background:#9ceb96;border:1px solid #c9e9c6;"></div>
<span class="t" style="left:100.2px;top:615.3px;font:italic 400 11px/15px 'Liberation Sans',sans-serif;color:#2a3a2a;transform:scaleX(0.4910);">PMT (9)</span>
<div class="r" style="left:133.7px;top:615.5px;width:37.9px;height:14.5px;background:#9ceb96;border:1px solid #c9e9c6;"></div>
<span class="t" style="left:139.9px;top:615.3px;font:italic 400 11px/15px 'Liberation Sans',sans-serif;color:#2a3a2a;transform:scaleX(0.5026);">SDT (281)</span>
<div class="r" style="left:176.8px;top:615.5px;width:38.0px;height:14.5px;background:#9ceb96;border:1px solid #c9e9c6;"></div>
<span class="t" style="left:186.8px;top:615.3px;font:italic 400 11px/15px 'Liberation Sans',sans-serif;color:#2a3a2a;transform:scaleX(0.4777);">CAT (1)</span>
<div class="r" style="left:220.0px;top:615.5px;width:38.5px;height:14.5px;background:#9ceb96;border:1px solid #c9e9c6;"></div>
<span class="t" style="left:231.0px;top:615.3px;font:italic 400 11px/15px 'Liberation Sans',sans-serif;color:#2a3a2a;transform:scaleX(0.4822);">NIT (1)</span>
<div class="r" style="left:271.8px;top:605.7px;width:121.0px;height:27.7px;background:#f4f4f4;border:1.6px solid #2f7196;box-shadow:0 0 0 1px #e4f4fb;"></div>
<svg style="left:327px;top:612px" width="12" height="16"><rect x="0.5" y="0.5" width="10" height="14" fill="#fff" stroke="#9aa"/><rect x="1.5" y="1.5" width="8" height="3" fill="#6a9ad8"/><path d="M1 8 h9 M1 11 h9" stroke="#bcc"/></svg>
<div class="r" style="left:44.9px;top:645.8px;width:40.1px;height:20.6px;background:#f1f1f1;border:1px solid #d5d5d5;border-radius:1px;box-shadow:inset 0 0 0 1px #fafafa;"></div>
<div class="r" style="left:45.9px;top:657.0px;width:38.1px;height:8.6px;background:#74e46c;"></div>
<span class="t" style="left:52.0px;top:648.0px;font:400 13px/17px 'Liberation Sans',sans-serif;color:#111;transform:scaleX(0.5803);">Present</span>
<div class="r" style="left:88.3px;top:645.8px;width:150.2px;height:20.6px;background:#f1f1f1;border:1px solid #d5d5d5;border-radius:1px;box-shadow:inset 0 0 0 1px #fafafa;"></div>
<div class="r" style="left:89.3px;top:656.8px;width:14.4px;height:8.8px;background:#ea6e6a;"></div>
<div class="r" style="left:103.7px;top:656.8px;width:11.5px;height:8.8px;background:#f0e66e;"></div>
<span class="t" style="left:145.0px;top:647.0px;font:400 13px/17px 'Liberation Sans',sans-serif;color:#111;transform:scaleX(0.5536);">SNR: 8,5 dB</span>
<div class="r" style="left:241.0px;top:645.8px;width:151.0px;height:20.6px;background:#f1f1f1;border:1px solid #d5d5d5;border-radius:1px;box-shadow:inset 0 0 0 1px #fafafa;"></div>
<span class="t" style="left:295.0px;top:647.0px;font:400 13px/17px 'Liberation Sans',sans-serif;color:#111;transform:scaleX(0.5385);">BER: &lt;1.0E-7</span>
<div class="r" style="left:44.9px;top:672.6px;width:40.1px;height:20.7px;background:#f1f1f1;border:1px solid #d5d5d5;border-radius:1px;box-shadow:inset 0 0 0 1px #fafafa;"></div>
<div class="r" style="left:45.9px;top:683.6px;width:38.1px;height:8.8px;background:#74e46c;"></div>
<span class="t" style="left:56.5px;top:674.5px;font:400 13px/17px 'Liberation Sans',sans-serif;color:#111;transform:scaleX(0.5827);">Lock</span>
<div class="r" style="left:88.3px;top:672.6px;width:150.2px;height:20.7px;background:#f1f1f1;border:1px solid #d5d5d5;border-radius:1px;box-shadow:inset 0 0 0 1px #fafafa;"></div>
<div class="r" style="left:89.3px;top:683.6px;width:14.4px;height:8.8px;background:#ea6e6a;"></div>
<div class="r" style="left:103.7px;top:683.6px;width:61.0px;height:8.8px;background:#f0e66e;"></div>
<div class="r" style="left:164.7px;top:683.6px;width:72.8px;height:8.8px;background:#74e46c;"></div>
<span class="t" style="left:140.5px;top:674.5px;font:400 13px/17px 'Liberation Sans',sans-serif;color:#111;transform:scaleX(0.5746);">Quality: 100%</span>
<div class="r" style="left:241.0px;top:672.6px;width:151.0px;height:20.7px;background:#f1f1f1;border:1px solid #d5d5d5;border-radius:1px;box-shadow:inset 0 0 0 1px #fafafa;"></div>
<div class="r" style="left:242.0px;top:683.6px;width:15.0px;height:8.8px;background:#ea6e6a;"></div>
<div class="r" style="left:257.0px;top:683.6px;width:46.0px;height:8.8px;background:#f0e66e;"></div>
<span class="t" style="left:300.0px;top:674.5px;font:400 13px/17px 'Liberation Sans',sans-serif;color:#111;transform:scaleX(0.5442);">Level: 42%</span>
<span class="t" style="left:39.6px;top:708.8px;font:400 13px/17px 'Liberation Sans',sans-serif;color:#222;transform:scaleX(0.6072);">Locked -&gt; Uptime: 00:03:30</span>
<svg style="left:388px;top:716px" width="10" height="10"><path d="M8 1 v1 M8 4 v1 M8 7 v1 M5 4 v1 M5 7 v1 M2 7 v1" stroke="#b0b0b0" stroke-width="1.5"/></svg>
<div class="r" style="left:399.3px;top:78.7px;width:433.0px;height:647.0px;background:#f3f3f3;box-shadow:0 0 7px rgba(0,0,0,.28);"></div>
<div class="r" style="left:399.3px;top:78.7px;width:433.0px;height:55.0px;background:#f8f8f8;"></div>
<svg style="left:404.5px;top:85.5px" width="11" height="18" viewBox="0 0 11 18"><path d="M5.5 0.5 L8.7 13 H2.3Z" fill="#f08a1a"/><path d="M4.2 5.2 h2.6 l0.6 2.6 h-3.8z" fill="#fff"/><path d="M3.2 10 h4.6 l0.4 1.6 h-5.4z" fill="#fff"/><path d="M1 12.8 h9 l0.8 4 h-10.6z" fill="#e8801a"/></svg>
<span class="t" style="left:418.8px;top:86.2px;font:400 14px/18px 'Liberation Sans',sans-serif;color:#bcbcbc;transform:scaleX(0.5421);">FIS Freestyle Ski &amp; FreeSki:... - VLC media player</span>
<svg style="left:748px;top:87px" width="80" height="16"><path d="M4 8.5 h8" stroke="#b2b2b2" stroke-width="1"/><rect x="34.5" y="2.5" width="6.5" height="11" fill="none" stroke="#b2b2b2" stroke-width="1"/><path d="M64.5 2.5 L72.5 13.5 M72.5 2.5 L64.5 13.5" stroke="#b2b2b2" stroke-width="1"/></svg>
<span class="t" style="left:404.2px;top:114.4px;font:400 14px/18px 'Liberation Sans',sans-serif;color:#dcd2d6;transform:scaleX(0.6105);">Médium</span>
<span class="t" style="left:446.3px;top:114.4px;font:400 14px/18px 'Liberation Sans',sans-serif;color:#dcd2d6;transform:scaleX(0.5444);">Prehrávanie</span>
<span class="t" style="left:498.8px;top:114.4px;font:400 14px/18px 'Liberation Sans',sans-serif;color:#dcd2d6;transform:scaleX(0.5900);">Zvuk</span>
<span class="t" style="left:527.0px;top:114.4px;font:400 14px/18px 'Liberation Sans',sans-serif;color:#dcd2d6;transform:scaleX(0.5344);">Video</span>
<span class="t" style="left:557.4px;top:114.4px;font:400 14px/18px 'Liberation Sans',sans-serif;color:#dcd2d6;transform:scaleX(0.5986);">Titulky</span>
<span class="t" style="left:592.3px;top:114.4px;font:400 14px/18px 'Liberation Sans',sans-serif;color:#dcd2d6;transform:scaleX(0.5620);">Nástroje</span>
<span class="t" style="left:632.6px;top:114.4px;font:400 14px/18px 'Liberation Sans',sans-serif;color:#dcd2d6;transform:scaleX(0.5661);">Zobraziť</span>
<span class="t" style="left:673.0px;top:114.4px;font:400 14px/18px 'Liberation Sans',sans-serif;color:#dcd2d6;transform:scaleX(0.5880);">Pomocník</span>
<div class="r" style="left:399.5px;top:133.7px;width:432.5px;height:506.3px;background:#000;"></div>
<svg style="left:0;top:0" width="1200" height="850" viewBox="0 0 1200 850">
<defs>
<clipPath id="pc"><rect x="400" y="236.3" width="432" height="301.2"/></clipPath>
<linearGradient id="sky" x1="0" x2="1" y1="0" y2="0"><stop offset="0" stop-color="#c2dacb"/><stop offset="0.35" stop-color="#d3e3c9"/><stop offset="0.6" stop-color="#e6ecc9"/><stop offset="0.8" stop-color="#f3f1cc"/><stop offset="1" stop-color="#f4eec6"/></linearGradient>
<linearGradient id="skyv" x1="0" x2="0" y1="0" y2="1"><stop offset="0" stop-color="#9cc4c0" stop-opacity="0.45"/><stop offset="0.6" stop-color="#dfeacc" stop-opacity="0.1"/><stop offset="1" stop-color="#fbf7d8" stop-opacity="0.55"/></linearGradient>
<linearGradient id="sea" x1="0" x2="0" y1="0" y2="1"><stop offset="0" stop-color="#1c586c"/><stop offset="0.12" stop-color="#2a7382"/><stop offset="0.19" stop-color="#2d7480"/><stop offset="0.215" stop-color="#274c56"/><stop offset="0.25" stop-color="#6f958f"/><stop offset="0.32" stop-color="#a9bcb0"/><stop offset="0.45" stop-color="#b3c1b3"/><stop offset="0.6" stop-color="#93a99f"/><stop offset="0.72" stop-color="#6f8a82"/><stop offset="1" stop-color="#5a746c"/></linearGradient>
<linearGradient id="glare" x1="0" x2="1" y1="0" y2="0"><stop offset="0" stop-color="#f5efc4" stop-opacity="0"/><stop offset="0.35" stop-color="#f5efc4" stop-opacity="0.1"/><stop offset="0.5" stop-color="#f0ecc6" stop-opacity="0.55"/><stop offset="0.62" stop-color="#f6f0c4" stop-opacity="0.9"/><stop offset="0.74" stop-color="#f8f2c8" stop-opacity="1"/><stop offset="1" stop-color="#f8f0c0" stop-opacity="1"/></linearGradient>
<linearGradient id="sand" x1="0" x2="0" y1="0" y2="1"><stop offset="0" stop-color="#ecd596"/><stop offset="0.4" stop-color="#e2be7c"/><stop offset="1" stop-color="#d8ae68"/></linearGradient>
<linearGradient id="hair" x1="0" x2="1" y1="0" y2="0.6"><stop offset="0" stop-color="#86642f"/><stop offset="0.35" stop-color="#b48e48"/><stop offset="0.7" stop-color="#dcbc6c"/><stop offset="1" stop-color="#b8944c"/></linearGradient>
<linearGradient id="shirt" x1="0" x2="1" y1="0" y2="0"><stop offset="0" stop-color="#e6dfbf"/><stop offset="0.5" stop-color="#f6f2d8"/><stop offset="1" stop-color="#ebe3c0"/></linearGradient>
<linearGradient id="arm" x1="0" x2="1" y1="0" y2="0"><stop offset="0" stop-color="#a8784a"/><stop offset="0.5" stop-color="#e0b07a"/><stop offset="1" stop-color="#c8935e"/></linearGradient>
<filter id="foamw" x="0" y="0" width="1" height="1"><feTurbulence type="fractalNoise" baseFrequency="0.02 0.075" numOctaves="3" seed="7" result="n"/><feColorMatrix in="n" type="matrix" values="0 0 0 0 0.93  0 0 0 0 0.94  0 0 0 0 0.88  4.5 0 0 0 -2.0" result="c"/><feComposite in="c" in2="SourceGraphic" operator="in"/></filter>
<filter id="foamd" x="0" y="0" width="1" height="1"><feTurbulence type="fractalNoise" baseFrequency="0.022 0.08" numOctaves="3" seed="23" result="n"/><feColorMatrix in="n" type="matrix" values="0 0 0 0 0.16  0 0 0 0 0.30  0 0 0 0 0.30  0 4.5 0 0 -2.15" result="c"/><feComposite in="c" in2="SourceGraphic" operator="in"/></filter>
<filter id="rippl" x="0" y="0" width="1" height="1"><feTurbulence type="fractalNoise" baseFrequency="0.025 0.16" numOctaves="2" seed="11" result="n"/><feColorMatrix in="n" type="matrix" values="0 0 0 0 0.30  0 0 0 0 0.58  0 0 0 0 0.62  4 0 0 0 -2.25" result="c"/><feComposite in="c" in2="SourceGraphic" operator="in"/></filter>
<filter id="rippd" x="0" y="0" width="1" height="1"><feTurbulence type="fractalNoise" baseFrequency="0.025 0.16" numOctaves="2" seed="31" result="n"/><feColorMatrix in="n" type="matrix" values="0 0 0 0 0.05  0 0 0 0 0.20  0 0 0 0 0.30  0 4 0 0 -1.75" result="c"/><feComposite in="c" in2="SourceGraphic" operator="in"/></filter>
<linearGradient id="fadeR" x1="400" x2="720" y1="0" y2="0" gradientUnits="userSpaceOnUse"><stop offset="0" stop-color="#fff" stop-opacity="1"/><stop offset="0.7" stop-color="#fff" stop-opacity="1"/><stop offset="1" stop-color="#fff" stop-opacity="0"/></linearGradient>
<linearGradient id="fadeV" x1="0" x2="0" y1="384" y2="484" gradientUnits="userSpaceOnUse"><stop offset="0" stop-color="#fff" stop-opacity="0"/><stop offset="0.14" stop-color="#fff" stop-opacity="1"/><stop offset="1" stop-color="#fff" stop-opacity="1"/></linearGradient><mask id="mV" maskUnits="userSpaceOnUse" x="400" y="384" width="432" height="100"><rect x="400" y="384" width="432" height="100" fill="url(#fadeV)"/></mask>
<filter id="b1" x="-10%" y="-10%" width="120%" height="120%"><feGaussianBlur stdDeviation="1"/></filter>
<filter id="b2" x="-10%" y="-10%" width="120%" height="120%"><feGaussianBlur stdDeviation="2.2"/></filter>
<filter id="b4" x="-20%" y="-20%" width="140%" height="140%"><feGaussianBlur stdDeviation="4"/></filter>
</defs>
<g clip-path="url(#pc)">
<rect x="400" y="236" width="432" height="106" fill="url(#sky)"/>
<rect x="400" y="236" width="432" height="106" fill="url(#skyv)"/>
<!-- sea -->
<rect x="400" y="340" width="432" height="200" fill="url(#sea)"/>
<!-- foam / shallow water -->
<g filter="url(#b2)">
<path d="M400 352 q30 -4 60 1 t70 -1 M410 362 q40 -5 90 0 M400 372 q30 -3 50 0" stroke="#4a97a0" stroke-width="3" fill="none" opacity=".7"/>
<path d="M400 346 q40 3 110 0 M400 358 q50 4 100 0 M420 368 q40 3 80 0" stroke="#15485c" stroke-width="3" fill="none" opacity=".6"/>
<path d="M430 366 q14 -3 28 0 q-14 4 -28 0z M470 364 q16 -3 30 1 q-16 4 -30 -1z" fill="#dfeae4" opacity=".75"/>
<path d="M400 384 Q440 378 470 384 T540 382 V392 Q470 396 400 392Z" fill="#22444e" opacity=".8"/>
<path d="M452 392 q22 -8 50 0 q4 10 -20 12 q-24 0 -30 -12z" fill="#eff0e4"/>
<path d="M450 398 q10 -6 18 2 q-8 6 -18 -2z" fill="#4a4a3c" opacity=".8"/>
<path d="M400 404 q40 -8 70 2 q20 12 -10 22 q-40 8 -60 -4z" fill="#dfe5da" opacity=".9"/>
<path d="M400 430 q30 8 70 -2 q20 -10 10 -24" stroke="#eef0e6" stroke-width="5" fill="none" opacity=".9"/>
<path d="M404 412 q20 6 40 0 M420 440 q20 8 50 -2 M400 456 q30 8 70 2" stroke="#56736f" stroke-width="7" fill="none" opacity=".7"/>
<path d="M400 446 q40 -6 80 4 M400 468 q30 -4 70 2 M402 476 q30 4 60 0" stroke="#e8ece2" stroke-width="3" fill="none" opacity=".8"/>
<path d="M400 462 q30 6 60 2 M410 480 q30 4 60 -2" stroke="#3f5a56" stroke-width="5" fill="none" opacity=".7"/>
<path d="M570 396 q40 -8 80 -2 q-10 14 -40 14 q-30 0 -40 -12z" fill="#e9ecdd" opacity=".8"/>
<path d="M566 420 q50 6 110 -6 M572 446 q50 8 100 -6 M580 470 q40 4 80 -6" stroke="#eef0e2" stroke-width="6" fill="none" opacity=".7"/>
<path d="M568 432 q40 6 90 -4 M590 458 q40 4 70 -4" stroke="#7f9a90" stroke-width="5" fill="none" opacity=".6"/>
</g>
<rect x="400" y="342" width="320" height="42" fill="url(#fadeR)" filter="url(#rippl)"/>
<rect x="400" y="342" width="320" height="42" fill="url(#fadeR)" filter="url(#rippd)"/>
<g mask="url(#mV)"><rect x="400" y="384" width="320" height="100" fill="url(#fadeR)" filter="url(#foamd)"/>
<rect x="400" y="384" width="320" height="100" fill="url(#fadeR)" filter="url(#foamw)"/></g>
<rect x="400" y="340" width="432" height="200" fill="url(#glare)"/>
<!-- horizon line dark on left -->
<linearGradient id="hz" x1="400" x2="700" y1="0" y2="0" gradientUnits="userSpaceOnUse"><stop offset="0" stop-color="#1a4e66"/><stop offset="0.6" stop-color="#1a4e66" stop-opacity=".7"/><stop offset="1" stop-color="#1a4e66" stop-opacity="0"/></linearGradient><path d="M400 340.300 L700 343.300" stroke="url(#hz)" stroke-width="1.600"/>
<!-- waves on bright side -->
<g filter="url(#b1)" opacity=".55">
<path d="M612 346 h90 M620 353 h70 M636 372 q30 -5 60 1 M640 400 q40 8 110 8 M632 425 q50 8 130 -10" stroke="#9aa890" stroke-width="1.600" fill="none"/>
<path d="M612 382 q10 4 20 4 M690 427 q40 -4 80 -14" stroke="#5a6a5a" stroke-width="1.600" fill="none"/>
</g>
<!-- dry sand -->
<path d="M684 462 Q730 452 772 440 Q800 436 832 438 V540 H690Z" fill="url(#sand)" filter="url(#b1)"/>
<path d="M760 352 Q790 354 832 350 V392 Q796 378 760 352Z" fill="#a39560" filter="url(#b1)"/>
<path d="M796 366 q18 4 36 20 v-14 q-16 -10 -36 -6z" fill="#6a5c36" filter="url(#b1)" opacity=".85"/>
<path d="M770 358 Q800 375 832 392 V400 Q795 385 766 360Z" fill="#e8cc88" filter="url(#b1)"/>
<!-- tower & buildings -->
<path d="M795.500 347 L796 313.500 h1.200 L798 347Z" fill="#5a5238"/>
<path d="M806 350 V333 h10 v3 h16 v14z" fill="#8a8a78" filter="url(#b1)"/>
<path d="M816 350 V337 h16 v13z" fill="#4a4a3a" filter="url(#b1)" opacity=".8"/>
<!-- right arm -->
<g filter="url(#b1)">
<path d="M563 408 Q575 410 586 420 Q600 432 619 436 Q636 436 650 430 L656 446 Q640 454 619 456 Q598 458 580 447 Q568 440 562 440Z" fill="#e6c29a"/>
<path d="M563 436 Q575 440 586 448 Q600 458 622 456" stroke="#b98a60" stroke-width="3" fill="none" opacity=".6"/>
<path d="M647 428 q9 -4 13 3 q3 7 -3 13 q-9 3 -12 -5z" fill="#c38a5e"/>
<path d="M657 444 l7 30 M663 432 l11 44" stroke="#8a4a2a" stroke-width="2.200" fill="none"/>
<path d="M655 462 l12 16" stroke="#222" stroke-width="2.600"/>
</g>
<!-- left arm -->
<g filter="url(#b1)">
<path d="M493 384 Q482 388 478 418 Q472 452 461 486 L492 488 Q502 452 506 424 Q512 392 493 384Z" fill="url(#arm)"/>
<path d="M506 398 Q506 430 494 484" stroke="#6a4326" stroke-width="4" fill="none" opacity=".6"/>
</g>
<!-- neck -->
<path d="M531 356 L527 396 L540 444 L553 398 L553 356Z" fill="#b88558" filter="url(#b1)"/>
<!-- shirt -->
<g filter="url(#b1)">
<path d="M497 382 Q512 378 527 390 L540 444 L551 396 Q560 400 565 414 L563 440 L559 484 H492 Q504 446 508 420 Q509 398 497 382Z" fill="url(#shirt)"/>
<path d="M540 444 V484" stroke="#cfc6a0" stroke-width="1.200"/>
<path d="M519 388 L524 416 L536 410 M556 402 L548 426 L545 410" stroke="#d4caa4" stroke-width="1.200" fill="none"/>
</g>
<!-- hair -->
<g filter="url(#b1)">
<path d="M548 279 Q533 282 527 300 Q523 312 521 320 L512 321 L519 328 Q515 340 509 350 Q501 366 502 378 Q505 390 512 394 Q520 398 526 396 Q530 404 534 398 Q538 380 531 352 Q526 312 540 296 Q556 300 557 330 L556 368 Q553 392 558 404 Q566 414 572 408 Q580 400 583 380 Q587 362 584 352 L589 346 L581 342 Q578 326 573 312 Q566 284 548 279Z" fill="url(#hair)"/>
<path d="M518 340 Q509 368 513 390 M574 340 Q582 372 574 402 M565 330 Q572 360 564 398" stroke="#8a6830" stroke-width="2.500" fill="none" opacity=".55"/>
<path d="M527 306 Q518 340 522 384 M579 350 Q584 372 579 394 M560 300 Q568 330 569 372" stroke="#f3e2a2" stroke-width="2.800" fill="none" opacity=".75"/>
<path d="M531 300 Q522 330 524 360 Q526 385 532 398 Q537 380 531 352 Q527 320 536 298Z" fill="#5e4020" opacity=".6"/><path d="M556 306 Q562 340 558 372 Q555 392 560 408 Q566 390 566 360 Q566 326 556 306Z" fill="#6a4824" opacity=".55"/><path d="M505 372 Q508 388 516 394 Q512 380 512 366Z" fill="#6a4a26" opacity=".5"/>
<!-- face -->
<path d="M540 294 Q528 310 529 340 Q532 362 542 368 Q554 362 556 338 Q558 306 540 294Z" fill="#bf8558"/>
<path d="M533 339 Q541 345 551 339 Q548 352 541 353 Q535 352 533 339Z" fill="#fff"/>
<path d="M535 347 Q541 349 549 346 Q546 358 541 358 Q537 357 535 347Z" fill="#5a2018"/>
<path d="M531 318 h7 M545 318 h7" stroke="#3a2010" stroke-width="1.800"/>
<path d="M531 312 q4 -2 8 0 M544 312 q4 -2 8 0" stroke="#7a5030" stroke-width="1" fill="none"/>
</g>
<!-- watermark -->
<g opacity=".42" fill="none" stroke="#8c8c96" stroke-width="2">
<ellipse cx="600.700" cy="420" rx="31" ry="43"/>
<path d="M589 384 L606 462 M617 392 L600 462 M585 438 q9 -9 13 2 q-6 9 -13 -2z" stroke-width="1.400"/>
<path d="M618 402 l4 26 M622 398 l4 28" stroke="#c85050" stroke-width="2"/>
</g>
<text x="567" y="477.500" font-family="'Liberation Serif',serif" font-weight="700" font-size="12.500" fill="#7e746c" opacity=".62" textLength="67" lengthAdjust="spacingAndGlyphs">DXSATCS.COM</text>
<!-- below banner -->
<rect x="400" y="522" width="432" height="16" fill="#b9b8a2"/>
<g filter="url(#b1)">
<path d="M400 524 h160 v14 h-160z" fill="#cfcab2"/>
<path d="M400 530 q20 -6 40 -2 v10 h-40z" fill="#8a8f80" opacity=".7"/>
<path d="M556 522 h150 l-16 16 h-134z" fill="#3c4a44"/>
<path d="M700 522 h132 v16 h-146z" fill="#d9ae66"/>
<path d="M412 524 Q440 522 470 524 L482 538 H410Z" fill="#d8a67a"/>
<path d="M476 522 h72 l4 16 h-80z" fill="#efe9ca"/>
</g>
<rect x="556" y="522" width="140" height="16" fill="#fff" filter="url(#foamw)" opacity=".8"/>
<!-- banner -->
<rect x="400" y="482.500" width="432" height="40" fill="#fbfbf9"/>
</g>
</svg>

<span class="t" style="left:459.0px;top:485.6px;font:700 30px/34px 'Liberation Sans',sans-serif;color:#2b55a6;transform:scaleX(0.3120);-webkit-text-stroke:0.7px #2b55a6;">BOOK NOW AT JET2HOLIDAYS.COM</span>
<svg style="left:752px;top:489px" width="22" height="22"><g stroke="#f4c81e" stroke-width="1.300"><path d="M9 12 L3 4 M10.500 10.500 L8 2 M12.500 10 L13.500 1.500 M14.500 10.500 L18.500 3.500 M16 12 L21 8 M16.500 14 L21.500 13"/></g><circle cx="12.500" cy="14" r="3.200" fill="#f8d428"/></svg>
<span class="t" style="left:698.5px;top:496.6px;font:700 18px/22px 'Liberation Sans',sans-serif;color:#e3242b;transform:scaleX(0.5823);font-style:italic;-webkit-text-stroke:0.5px #e3242b;">Jet2holidays</span>
<span class="t" style="left:403.0px;top:643.3px;font:400 12px/16px 'Liberation Sans',sans-serif;color:#222;transform:scaleX(0.6860);">02:46</span>
<span class="t" style="left:807.5px;top:643.3px;font:400 12px/16px 'Liberation Sans',sans-serif;color:#222;transform:scaleX(0.6727);">00:00</span>
<div class="r" style="left:433.5px;top:644.0px;width:363.0px;height:3.5px;background:#e4e4e4;border:1px solid #d8d8d8;border-radius:2px;"></div>
<div class="r" style="left:410.5px;top:662.5px;width:15.0px;height:25.0px;background:#efefef;border:1px solid #dddddd;"></div>
<div class="r" style="left:428.5px;top:662.5px;width:14.8px;height:25.0px;background:#efefef;border:1px solid #dddddd;"></div>
<div class="r" style="left:445.8px;top:662.5px;width:15.2px;height:25.0px;background:#efefef;border:1px solid #dddddd;"></div>
<div class="r" style="left:463.3px;top:662.5px;width:15.5px;height:25.0px;background:#efefef;border:1px solid #dddddd;"></div>
<svg style="left:0;top:0" width="1200" height="850"><ellipse cx="418.300" cy="675" rx="4.600" ry="6.700" fill="#ee1016"/><rect x="430.500" y="669.300" width="11.200" height="12.400" rx="1.500" fill="#7e7e7e"/><rect x="433.800" y="667.300" width="5" height="3" fill="#7e7e7e"/><ellipse cx="436.100" cy="675.600" rx="3.100" ry="4.200" fill="#efefef"/><ellipse cx="436.100" cy="675.600" rx="1.500" ry="2.400" fill="#7e7e7e"/><path d="M450.500 674 V668.600 h6.300 V671.500" stroke="#7e7e7e" stroke-width="1.700" fill="none"/><path d="M454.300 670.800 h5 l-2.500 3.400z" fill="#7e7e7e"/><rect x="466" y="668.300" width="1.800" height="14.200" fill="#7e7e7e"/><path d="M468.900 668.300 L475.600 675.400 L468.900 682.500Z" fill="#7e7e7e"/></svg>
<span class="t" style="left:448.8px;top:675.0px;font:700 8px/12px 'Liberation Sans',sans-serif;color:#7e7e7e;transform:scaleX(0.6057);">A</span>
<span class="t" style="left:454.7px;top:675.0px;font:700 8px/12px 'Liberation Sans',sans-serif;color:#7e7e7e;transform:scaleX(0.5884);">B</span>
<div class="r" style="left:402.7px;top:690.8px;width:20.0px;height:30.9px;background:#efefef;border:1px solid #dddddd;"></div>
<svg style="left:0;top:0" width="1200" height="850" fill="#7e7e7e"><rect x="407.700" y="698" width="3.700" height="18.700" fill="#8c8c8c"/><rect x="414.200" y="698" width="3.800" height="18.700" fill="#8c8c8c"/></svg>
<div class="r" style="left:432.2px;top:694.2px;width:15.3px;height:25.5px;background:#efefef;border:1px solid #dddddd;"></div>
<div class="r" style="left:449.7px;top:694.2px;width:15.0px;height:25.5px;background:#efefef;border:1px solid #dddddd;"></div>
<div class="r" style="left:467.2px;top:694.2px;width:15.0px;height:25.5px;background:#efefef;border:1px solid #dddddd;"></div>
<div class="r" style="left:492.5px;top:694.2px;width:15.0px;height:25.5px;background:#efefef;border:1px solid #dddddd;"></div>
<div class="r" style="left:510.2px;top:694.2px;width:15.3px;height:25.5px;background:#efefef;border:1px solid #dddddd;"></div>
<div class="r" style="left:536.0px;top:694.2px;width:15.3px;height:25.5px;background:#efefef;border:1px solid #dddddd;"></div>
<div class="r" style="left:571.3px;top:694.2px;width:15.0px;height:25.5px;background:#efefef;border:1px solid #dddddd;"></div>
<div class="r" style="left:553.0px;top:693.7px;width:15.8px;height:26.5px;background:#efefef;border:1px solid #dddddd;border:1.500px solid #35566e;"></div>
<svg style="left:0;top:0" width="1200" height="850" fill="#7e7e7e" stroke="none"><rect x="435" y="702.500" width="1.800" height="10"/><path d="M441 702.500 v10 L436.600 707.500z M445.200 702.500 v10 L440.800 707.500z"/><rect x="453.800" y="702.200" width="7.200" height="10.600"/><path d="M470 702.500 v10 L474.400 707.500z M474.200 702.500 v10 L478.600 707.500z"/><rect x="478.300" y="702.500" width="1.800" height="10"/><path d="M496.100 704.800 V700.900 h2.800 M502 700.900 h2.800 V704.800 M504.800 710 v3.900 h-2.800 M498.900 713.900 h-2.800 V710" stroke="#7e7e7e" stroke-width="1.900" fill="none"/><path d="M513.800 700 v15 M518 700 v15 M522.200 700 v15" stroke="#7e7e7e" stroke-width="1.500"/><rect x="512.300" y="708.500" width="3" height="3.400"/><rect x="516.500" y="703" width="3" height="3.400"/><rect x="520.700" y="706.500" width="3" height="3.400"/><path d="M512.600 702.500 l1.200 -2.500 l1.200 2.500z M521 702.500 l1.200 -2.500 l1.200 2.500z"/><path d="M538.800 701.500 h9.200 M538.800 705.700 h9.200 M538.800 709.900 h6" stroke="#7e7e7e" stroke-width="1.900"/><path d="M538.800 713.500 h5.500" stroke="#7e7e7e" stroke-width="1.500"/><path d="M545 711.500 l3 2 l-3 2z"/><path d="M557.200 707 V703.300 h6.300 M564.700 709.500 v3.700 h-6.300" stroke="#7e7e7e" stroke-width="1.800" fill="none"/><path d="M562.800 700.800 l3 2.500 l-3 2.500z M559.100 710.700 l-3 2.500 l3 2.500z"/><path d="M574.200 701.500 L582.600 714 M574.200 714 L577 709.800 M579.800 705.700 L582.600 701.500" stroke="#7e7e7e" stroke-width="1.600" fill="none"/><path d="M584 700.300 v4 h-2.800z M584 715.200 v-4 h-2.800z"/></svg>
<svg style="left:756px;top:696px" width="70" height="28"><path d="M2 17.500 h2 l3 -3 v9.500 l-3 -3 h-2z" fill="#8a8a8a"/><path d="M8.500 16 q1.500 2.500 0 5" stroke="#e0a030" stroke-width="1.200" fill="none"/><path d="M14 25.500 L63.500 3 V25.500Z" fill="#fafafa" stroke="#9a9a9a" stroke-width="1"/><defs><linearGradient id="vg" x1="0" x2="1"><stop offset="0" stop-color="#9fe89a"/><stop offset="1" stop-color="#2fc83a"/></linearGradient></defs><path d="M15.500 25 L45 11.600 V25Z" fill="url(#vg)"/></svg>
<span class="t" style="left:776.0px;top:697.9px;font:400 9px/13px 'Liberation Sans',sans-serif;color:#9a9a9a;transform:scaleX(0.7217);">80%</span>
<div class="r" style="left:305.0px;top:779.0px;width:610.0px;height:59.5px;background:#fafafa;box-shadow:0 0 8px rgba(0,0,0,.3);"></div>
<svg style="left:311px;top:788.500px" width="11" height="13"><rect x="0" y="0" width="10" height="12.300" fill="#111"/><rect x="0" y="0" width="10" height="2" fill="#e4e4e4"/><rect x="0" y="0" width="10" height="0.800" fill="#555"/><path d="M1.500 5 l2.200 2 l-2.200 2 M5 10 h3.500" stroke="#fff" stroke-width="1" fill="none"/></svg>
<span class="t" style="left:324.5px;top:786.2px;font:400 14px/18px 'Liberation Sans',sans-serif;color:#c0c0c0;transform:scaleX(0.5653);">Príkazový riadok</span>
<svg style="left:831px;top:786px" width="80" height="16"><path d="M4 8.500 h8" stroke="#b2b2b2" stroke-width="1"/><rect x="34.500" y="2.500" width="6.500" height="11" fill="none" stroke="#b2b2b2" stroke-width="1"/><path d="M64.500 2.500 L72.500 13.500 M72.500 2.500 L64.500 13.500" stroke="#b2b2b2" stroke-width="1"/></svg>
<div class="r" style="left:305.0px;top:812.7px;width:599.0px;height:25.8px;background:#0a0a0a;"></div>
<span class="t" style="left:306.0px;top:813.2px;font:400 15px/19px 'Liberation Mono',monospace;color:#eeeeee;transform:scaleX(0.5969);-webkit-text-stroke:0.15px #eee;">C:\Users\Roman&gt;Roman Dávid_dxsatcs.com_Lučenec/Slovakia_A2E at 28.2°E_11 426 V_Freesat_UK SPOT_online scanning</span>
<svg style="left:904px;top:814px" width="10" height="24"><path d="M2 7 L5 3 L8 7 M2 15 L5 19 L8 15" stroke="#444" stroke-width="1.200" fill="none"/></svg>
<div class="r" style="left:575.0px;top:838.3px;width:30.0px;height:9.0px;background:linear-gradient(90deg,rgba(255,255,255,0),rgba(255,255,255,.9),rgba(255,255,255,0));"></div>
</body></html>
